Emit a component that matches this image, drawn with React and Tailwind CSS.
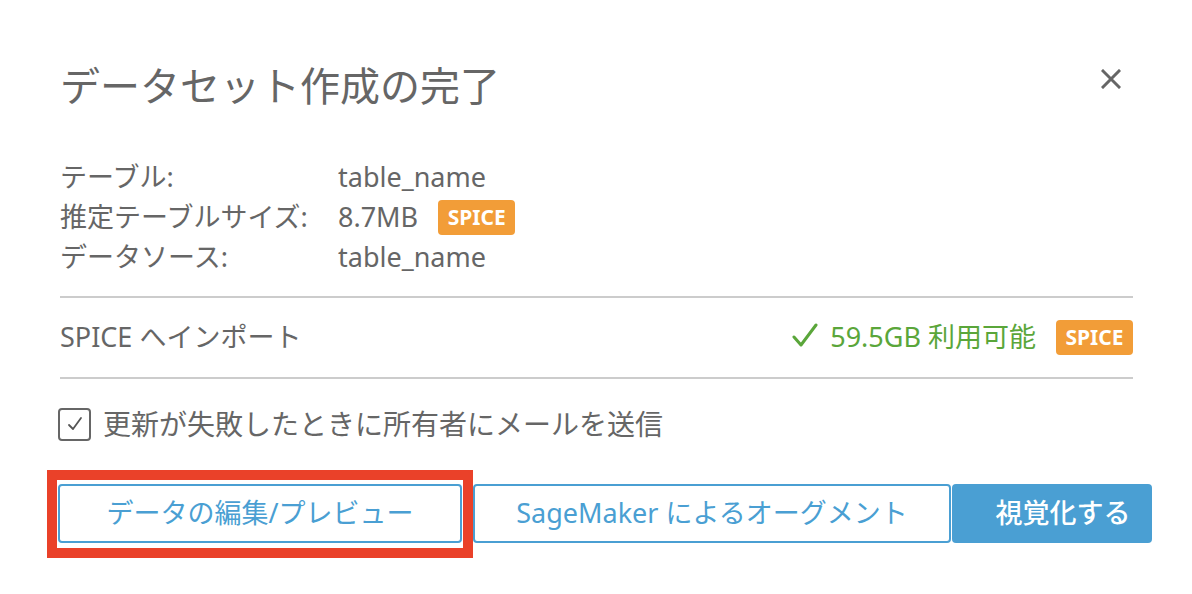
export default function App() {
  const Badge = () => (
    <span className="inline-flex items-center justify-center w-[77px] h-[35px] rounded-[4px] bg-[#F29D38] text-white text-[21px] font-bold leading-none">
      SPICE
    </span>
  );
  return (
    <div className="relative w-[1192px] h-[594px] bg-white text-[#666] font-[family-name:'Noto_Sans','Noto_Sans_CJK_JP',sans-serif]">
      <div className="pl-[60px] pr-[59px] flex flex-col">
        <div className="flex items-start justify-between mt-[62px]">
          <h1 className="text-[40px] leading-[48px] font-normal text-[#666]">データセット作成の完了</h1>
          <svg className="mt-[7px] mr-[12px]" width="20" height="20" viewBox="0 0 20 20">
            <path d="M2 2L18 18M18 2L2 18" stroke="#666" strokeWidth="3" strokeLinecap="square" />
          </svg>
        </div>
        <div className="mt-[47px] text-[27px] leading-[40px]">
          <div className="flex items-center">
            <span className="w-[278px]">テーブル:</span>
            <span>table_name</span>
          </div>
          <div className="flex items-center">
            <span className="w-[278px]">推定テーブルサイズ:</span>
            <span>8.7MB</span>
            <span className="ml-[20px] flex"><Badge /></span>
          </div>
          <div className="flex items-center">
            <span className="w-[278px]">データソース:</span>
            <span>table_name</span>
          </div>
        </div>
        <div className="mt-[19px] h-[2px] bg-[#cccccc]" />
        <div className="h-[79px] flex items-center justify-between text-[27px]">
          <span>SPICE へインポート</span>
          <div className="flex items-center">
            <svg width="26" height="26" viewBox="0 0 26 26" className="mr-[12px] mb-[4px]">
              <path d="M2 14L9 22L24 2" stroke="#5AA63A" strokeWidth="3" fill="none" strokeLinecap="round" strokeLinejoin="round" />
            </svg>
            <span className="text-[#5AA63A]">59.5GB 利用可能</span>
            <span className="ml-[20px] flex"><Badge /></span>
          </div>
        </div>
        <div className="h-[2px] bg-[#cccccc]" />
        <div className="mt-[27px] flex items-center text-[28px]">
          <span className="-ml-[2px] shrink-0 w-[33px] h-[33px] rounded-[4px] border-2 border-[#666] flex items-center justify-center">
            <svg width="18" height="18" viewBox="0 0 18 18">
              <path d="M3 10L7 14L15 3" stroke="#555" strokeWidth="1.8" fill="none" strokeLinecap="round" strokeLinejoin="round" />
            </svg>
          </span>
          <span className="ml-[12px] leading-[36px]">更新が失敗したときに所有者にメールを送信</span>
        </div>
        <div className="mt-[42px] flex text-[27px]">
          <button className="shrink-0 -ml-[2px] w-[404px] h-[59px] rounded-[4px] border-2 border-[#4A9FD3] bg-white text-[#4A9FD3] flex items-center justify-center">
            データの編集/プレビュー
          </button>
          <button className="shrink-0 ml-[11px] w-[478px] h-[59px] rounded-[4px] border-2 border-[#4A9FD3] bg-white text-[#4A9FD3] flex items-center justify-center">
            SageMaker によるオーグメント
          </button>
          <button className="shrink-0 ml-[1px] w-[200px] h-[59px] rounded-[4px] bg-[#4A9FD3] text-white font-medium flex items-center justify-center pl-[22px]">
            視覚化する
          </button>
        </div>
      </div>
      <div className="absolute left-[47px] top-[470px] w-[426px] h-[88px] border-[10px] border-[#EA4129]" />
    </div>
  );
}
